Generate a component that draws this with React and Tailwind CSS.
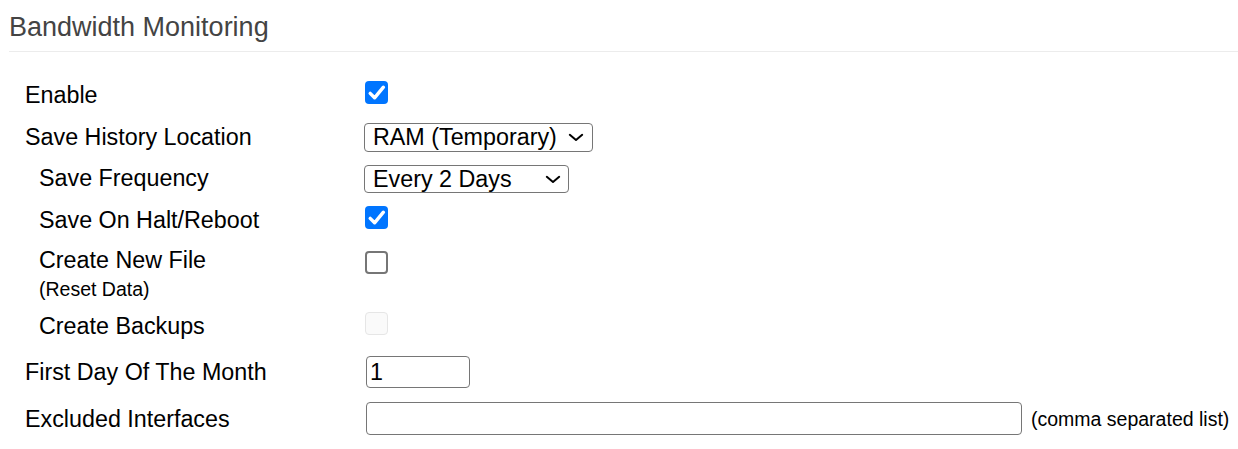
import React from "react";

const font = "font-['Liberation_Sans',Arial,sans-serif]";

function Chevron() {
  return (
    <svg width="16" height="9" viewBox="0 0 16 9" className="shrink-0">
      <path d="M1.8 1.8 L8 7 L14.2 1.8" fill="none" stroke="#000" strokeWidth="2" strokeLinecap="round" strokeLinejoin="round" />
    </svg>
  );
}

function Checked() {
  return (
    <div className="w-[23px] h-[23px] rounded-[4px] bg-[#0075ff] flex items-center justify-center">
      <svg width="23" height="23" viewBox="0 0 23 23">
        <path d="M5.2 12.4 L9.6 16.8 L18.4 6.2" fill="none" stroke="#fff" strokeWidth="3.4" strokeLinecap="round" strokeLinejoin="round" />
      </svg>
    </div>
  );
}

function Unchecked() {
  return <div className="w-[23px] h-[23px] rounded-[4px] border-2 border-[#767676] bg-white" />;
}

function Disabled() {
  return <div className="w-[23px] h-[23px] rounded-[4px] border-[1.5px] border-[#e6e6e6] bg-[#fafafa]" />;
}

function Row({ h, lpt, cpt, indent, label, children }) {
  return (
    <div className={`flex ${h}`}>
      <div className={`w-[339px] shrink-0 ${lpt} ${indent ? "pl-[14px]" : ""}`}>{label}</div>
      <div className={cpt}>{children}</div>
    </div>
  );
}

export default function App() {
  const lbl = "text-[23.3px] leading-[27px] text-black whitespace-nowrap";
  return (
    <div className={`${font} w-[1238px] h-[449px] bg-white pl-[9px] overflow-hidden`}>
      <div className="pt-[11px] pb-[8px] border-b border-[#ececec]">
        <h1 className="text-[27px] leading-[32px] text-[#444444] font-normal">Bandwidth Monitoring</h1>
      </div>
      <div className="pt-[22px] pl-[16px]">
        <Row h="h-[42px]" lpt="pt-[8px]" cpt="pt-[7px] pl-[1px]" label={<div className={lbl}>Enable</div>}>
          <Checked />
        </Row>
        <Row h="h-[42px]" lpt="pt-[8px]" cpt="pt-[7px]" label={<div className={lbl}>Save History Location</div>}>
          <div className="w-[229px] h-[29px] border border-[#767676] rounded-[4px] flex items-center justify-between pl-[8px] pr-[8px]">
            <span className="text-[23.3px] leading-[27px] text-black whitespace-nowrap">RAM (Temporary)</span>
            <Chevron />
          </div>
        </Row>
        <Row h="h-[42px]" lpt="pt-[7px]" cpt="pt-[7px]" indent label={<div className={lbl}>Save Frequency</div>}>
          <div className="w-[205px] h-[28px] border border-[#767676] rounded-[4px] flex items-center justify-between pl-[8px] pr-[7px]">
            <span className="text-[23.3px] leading-[27px] text-black whitespace-nowrap">Every 2 Days</span>
            <Chevron />
          </div>
        </Row>
        <Row h="h-[41px]" lpt="pt-[7px]" cpt="pt-[6px] pl-[1px]" indent label={<div className={lbl}>Save On Halt/Reboot</div>}>
          <Checked />
        </Row>
        <Row
          h="h-[64px]"
          lpt="pt-[6px]"
          cpt="pt-[10px] pl-[1px]"
          indent
          label={
            <div>
              <div className={lbl}>Create New File</div>
              <div className="mt-[4px] text-[19.5px] leading-[22px] text-black whitespace-nowrap">(Reset Data)</div>
            </div>
          }
        >
          <Unchecked />
        </Row>
        <Row h="h-[42px]" lpt="pt-[8px]" cpt="pt-[7px] pl-[1px]" indent label={<div className={lbl}>Create Backups</div>}>
          <Disabled />
        </Row>
        <Row h="h-[48px]" lpt="pt-[12px]" cpt="pt-[9px] pl-[2px]" label={<div className={lbl}>First Day Of The Month</div>}>
          <div className="w-[104px] h-[32px] border border-[#767676] rounded-[4px] flex items-center pl-[3px]">
            <span className="text-[23.3px] leading-[27px] text-black">1</span>
          </div>
        </Row>
        <Row h="h-[54px]" lpt="pt-[11px]" cpt="pt-[7px] pl-[2px] flex items-start" label={<div className={lbl}>Excluded Interfaces</div>}>
          <div className="flex items-center">
            <div className="w-[656px] h-[33px] border border-[#767676] rounded-[4px]" />
            <span className="ml-[9px] text-[19.5px] leading-[22px] text-black whitespace-nowrap">(comma separated list)</span>
          </div>
        </Row>
      </div>
    </div>
  );
}
